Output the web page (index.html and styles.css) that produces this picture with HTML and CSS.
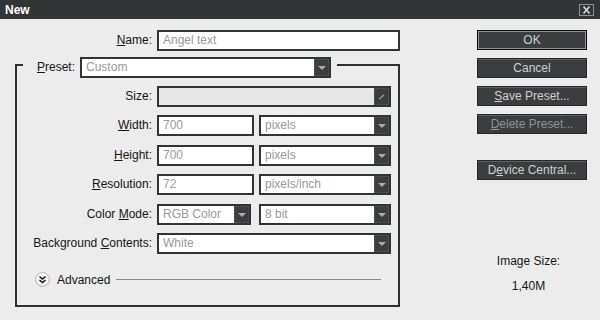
FILE: index.html
```html
<!DOCTYPE html>
<html>
<head>
<meta charset="utf-8">
<link rel="stylesheet" href="styles.css">
</head>
<body>
<div class="titlebar">
  <span class="title">New</span>
  <span class="close"><svg width="13" height="10" viewBox="0 0 13 10"><path d="M3.5 1.5 L9.5 8.5 M9.5 1.5 L3.5 8.5" stroke="#d8dada" stroke-width="1.6" fill="none"/></svg></span>
</div>
<div class="dialog">
  <div class="left">
    <div class="name-row">
      <span class="lbl"><u>N</u>ame:</span>
      <div class="box"><span class="val">Angel text</span></div>
    </div>
    <fieldset class="group">
      <legend class="preset">
        <span class="lbl"><u>P</u>reset:</span>
        <div class="box sel preset-sel"><span class="val">Custom</span><span class="btn"><i class="tri"></i></span></div>
      </legend>
      <div class="grid">
        <span class="lbl">Size:</span>
        <div class="box sel disabled"><span class="val"></span><span class="btn"><svg width="9" height="8" viewBox="0 0 9 8"><path d="M2 6 L7 2" stroke="#9a9d9d" stroke-width="1.4"/></svg></span></div>

        <span class="lbl"><u>W</u>idth:</span>
        <div class="pair">
          <div class="box"><span class="val">700</span></div>
          <div class="box sel"><span class="val">pixels</span><span class="btn"><i class="tri"></i></span></div>
        </div>

        <span class="lbl"><u>H</u>eight:</span>
        <div class="pair">
          <div class="box"><span class="val">700</span></div>
          <div class="box sel"><span class="val">pixels</span><span class="btn"><i class="tri"></i></span></div>
        </div>

        <span class="lbl"><u>R</u>esolution:</span>
        <div class="pair">
          <div class="box"><span class="val">72</span></div>
          <div class="box sel"><span class="val">pixels/inch</span><span class="btn"><i class="tri"></i></span></div>
        </div>

        <span class="lbl">Color <u>M</u>ode:</span>
        <div class="pair">
          <div class="box sel narrow"><span class="val">RGB Color</span><span class="btn"><i class="tri"></i></span></div>
          <div class="box sel"><span class="val">8 bit</span><span class="btn"><i class="tri"></i></span></div>
        </div>

        <span class="lbl">Background <u>C</u>ontents:</span>
        <div class="box sel"><span class="val">White</span><span class="btn"><i class="tri"></i></span></div>
      </div>
      <div class="advanced">
        <span class="adv-icon"><svg width="9" height="9" viewBox="0 0 9 9"><path d="M1.5 1.5 L4.5 4 L7.5 1.5 M1.5 5 L4.5 7.5 L7.5 5" stroke="#111" stroke-width="1.5" fill="none"/></svg></span>
        <span class="adv-text">Advanced</span>
        <span class="adv-line"></span>
      </div>
    </fieldset>
  </div>
  <div class="right">
    <div class="button default">OK</div>
    <div class="button">Cancel</div>
    <div class="button"><u>S</u>ave Preset...</div>
    <div class="button off"><u>D</u>elete Preset...</div>
    <div class="button device">D<u>e</u>vice Central...</div>
    <div class="imgsize">
      <div>Image Size:</div>
      <div>1,40M</div>
    </div>
  </div>
</div>
</body>
</html>
```
FILE: styles.css
```css
* { box-sizing: border-box; }
html, body {
  margin: 0;
  width: 600px;
  height: 320px;
  overflow: hidden;
  background: #ececec;
  font-family: "Liberation Sans", Arial, sans-serif;
  font-size: 12px;
  color: #151515;
}
u { text-decoration: underline; text-underline-offset: 1px; }

.titlebar {
  height: 19px;
  background: #313536;
  display: flex;
  align-items: center;
  justify-content: space-between;
  padding: 0 6px 0 5px;
}
.title { color: #fff; font-weight: bold; font-size: 12px; }
.close {
  width: 15px;
  height: 12px;
  border: 1px solid #8e9292;
  display: flex;
  align-items: center;
  justify-content: center;
}
.close svg { display: block; }

.dialog {
  display: flex;
  padding: 11px 0 0 15px;
}
.left { width: 385px; }
.right {
  margin-left: 77px;
  width: 110px;
  display: flex;
  flex-direction: column;
  gap: 8px;
}

.lbl { text-align: right; white-space: nowrap; line-height: 21px; }

.box {
  height: 21px;
  border: 2px solid #323434;
  background: #fff;
  display: flex;
  align-items: stretch;
  color: #9a9a9a;
  min-width: 0;
}
.box .val {
  flex: 1;
  padding-left: 4px;
  line-height: 17px;
  white-space: nowrap;
  overflow: hidden;
}
.sel .btn {
  width: 15px;
  background: #3b3e3e;
  box-shadow: inset 0 0 0 1px #4b4e4e;
  display: flex;
  align-items: center;
  justify-content: center;
}
.tri {
  display: block;
  width: 0;
  height: 0;
  border-left: 4px solid transparent;
  border-right: 4px solid transparent;
  border-top: 4px solid #a9acac;
  margin-top: 1px;
}
.disabled { background: #e7e7e7; }

.name-row {
  display: grid;
  grid-template-columns: 137px 243px;
  column-gap: 5px;
}

.group {
  margin: 0;
  padding: 0 7px 17px 0;
  border: 2px solid #2f3131;
  min-inline-size: 0;
  width: 385px;
}
.preset {
  margin-left: 6px;
  padding: 6px 6px 0 14px;
  display: flex;
  gap: 5px;
}
.preset-sel { width: 251px; }

.grid {
  margin-top: 8px;
  display: grid;
  grid-template-columns: 135px 234px;
  column-gap: 5px;
  row-gap: 8.4px;
}
.pair {
  display: grid;
  grid-template-columns: 97px 132px;
  column-gap: 5px;
}
.pair .narrow { width: 94px; }

.advanced {
  margin: 18px 10px 0 18px;
  height: 16px;
  display: flex;
  align-items: center;
}
.adv-icon {
  width: 15px;
  height: 15px;
  border-radius: 50%;
  border: 1px solid #b8b8b8;
  background: radial-gradient(circle at 45% 35%, #ffffff 0%, #f4f4f4 55%, #d6d6d6 100%);
  display: flex;
  align-items: center;
  justify-content: center;
  flex: none;
}
.adv-icon svg { display: block; }
.adv-text { margin-left: 7px; }
.adv-line {
  flex: 1;
  height: 1px;
  background: #8c8c8c;
  margin-left: 6px;
}

.button {
  height: 20px;
  background: #3b3e3e;
  border: 1px solid #262828;
  box-shadow: inset 0 1px 0 #5f6262;
  color: #cdd1d1;
  text-align: center;
  line-height: 18px;
  white-space: nowrap;
}
.button.default {
  border: 1px solid #0c0c0c;
  box-shadow: inset 0 0 0 1px #8d9090;
}
.button.off { color: #8e9292; }
.button.device { margin-top: 18px; }

.imgsize {
  margin-top: 66px;
  padding-right: 7px;
  text-align: center;
  display: flex;
  flex-direction: column;
  gap: 10px;
  line-height: 15px;
  color: #151515;
}
```
